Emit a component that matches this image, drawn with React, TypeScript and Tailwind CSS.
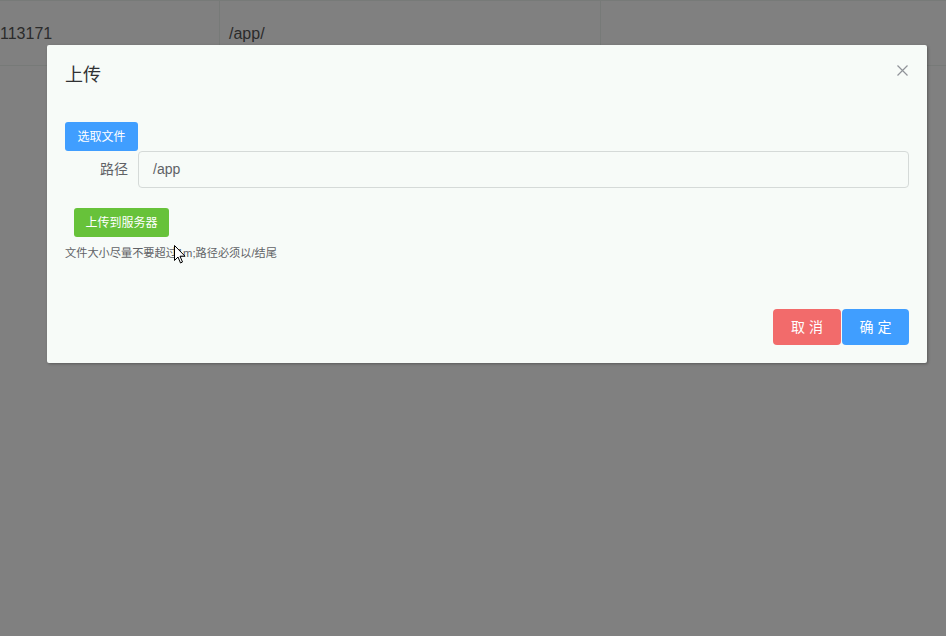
import React from "react";

export default function App() {
  const font = { fontFamily: '"Liberation Sans", "Noto Sans CJK SC", sans-serif' };
  return (
    <div className="relative w-[946px] h-[636px] overflow-hidden bg-[#808080]" style={font}>
      {/* table row behind overlay */}
      <div className="flex h-[66px] border-t border-b border-[#777a78] text-[16px] text-[#2b2b2b]">
        <div className="w-[220px] flex items-center pt-[1px] border-r border-[#777a78]">113171</div>
        <div className="w-[381px] flex items-center pt-[1px] pl-[9px] border-r border-[#777a78]">/app/</div>
        <div className="flex-1" />
      </div>

      {/* dialog */}
      <div className="absolute left-[47px] top-[45px] w-[880px] h-[318px] bg-[#f7fbf8] rounded-[2px] shadow-[1px_1px_3px_rgba(0,0,0,0.3)] flex flex-col">
        <div className="relative px-[18px] pt-[18px] h-[60px]">
          <span className="text-[18px] leading-[24px] text-[#303133]">上传</span>
          <svg className="absolute right-[19px] top-[20px]" width="11" height="11" viewBox="0 0 11 11">
            <path d="M0.5 0.5 L10.5 10.5 M10.5 0.5 L0.5 10.5" stroke="#909399" strokeWidth="1.2" />
          </svg>
        </div>
        <div className="px-[18px] pt-[17px] flex flex-col">
          <div>
            <button className="h-[29px] w-[73px] rounded-[3px] bg-[#409eff] text-white text-[12px]">选取文件</button>
          </div>
          <div className="flex items-center h-[37px]">
            <div className="w-[73px] pr-[10px] text-right text-[14px] text-[#606266]">路径</div>
            <div className="flex-1 h-[37px] border border-[#d5dad8] rounded-[4px] flex items-center pl-[14px] text-[14px] text-[#606266]">/app</div>
          </div>
          <div className="pl-[9px] mt-[20px]">
            <button className="h-[29px] w-[95px] rounded-[3px] bg-[#67c23a] text-white text-[12px]">上传到服务器</button>
          </div>
          <div className="mt-[8px] text-[11.2px] leading-[16px] text-[#606266]">文件大小尽量不要超过1m;路径必须以/结尾</div>
        </div>
        <div className="flex-1" />
        <div className="flex justify-end pr-[18px] pb-[18px]">
          <button className="h-[36px] w-[68px] rounded-[4px] bg-[#f26b6b] text-white text-[14px] tracking-[4px] pl-[4px]">取消</button>
          <button className="h-[36px] w-[67px] rounded-[4px] bg-[#409eff] text-white text-[14px] tracking-[4px] pl-[4px] ml-[1px]">确定</button>
        </div>
      </div>

      {/* mouse cursor */}
      <svg className="absolute left-[174px] top-[245px]" width="12" height="19" viewBox="0 0 12 19">
        <path d="M0.5 0.5 L0.5 15.5 L4 12 L6.5 18 L8.5 17 L6 11.2 L11 11.2 Z" fill="#fff" stroke="#000" strokeWidth="1" />
      </svg>
    </div>
  );
}
